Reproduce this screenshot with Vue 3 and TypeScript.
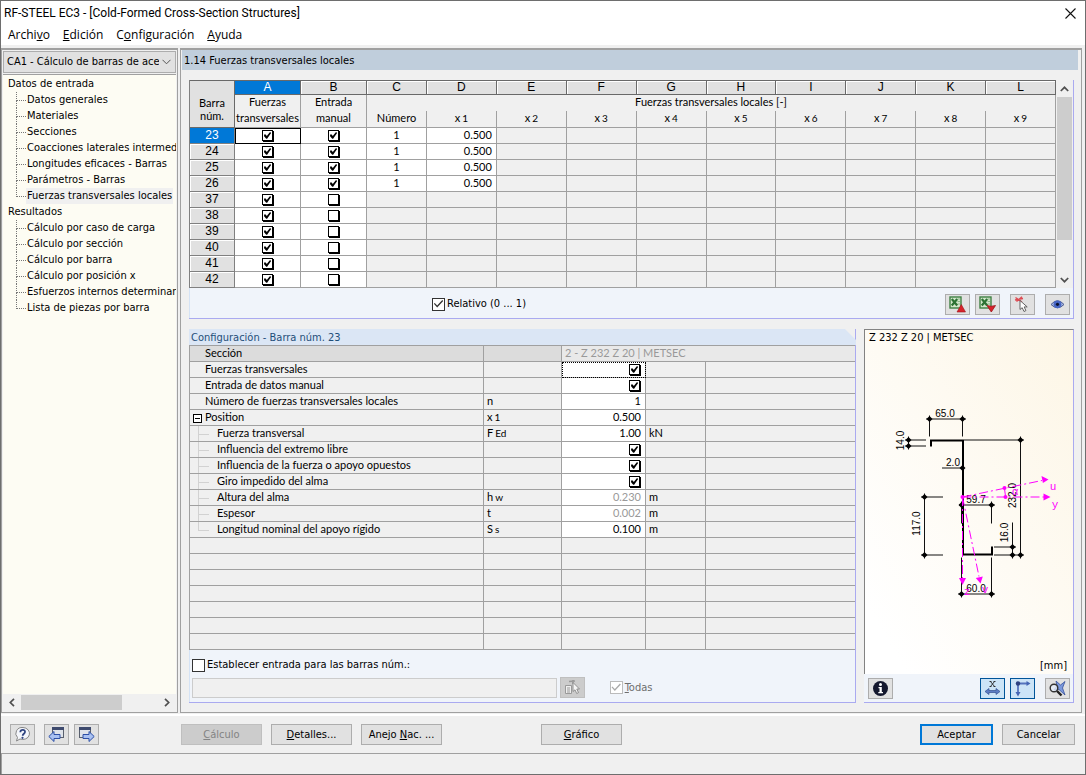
<script setup lang="ts">
import { reactive, ref } from 'vue'

type Mnemonic = [string, string, string]

interface GridRow {
  id: number
  force: boolean
  manual: boolean
  count: string
  x1: string
}

interface SettingRow {
  label: string
  level: number
  symbol?: string
  sub?: string
  value?: string
  unit?: string
  checked?: boolean
  muted?: boolean
}

const menus: Mnemonic[] = [
  ['Archi', 'v', 'o'],
  ['', 'E', 'dición'],
  ['C', 'o', 'nfiguración'],
  ['', 'A', 'yuda'],
]

const activeItem = ref('Fuerzas transversales locales')
const tree = [
  {
    title: 'Datos de entrada',
    items: [
      'Datos generales',
      'Materiales',
      'Secciones',
      'Coacciones laterales intermedias',
      'Longitudes eficaces - Barras',
      'Parámetros - Barras',
      'Fuerzas transversales locales',
    ],
  },
  {
    title: 'Resultados',
    items: [
      'Cálculo por caso de carga',
      'Cálculo por sección',
      'Cálculo por barra',
      'Cálculo por posición x',
      'Esfuerzos internos determinantes',
      'Lista de piezas por barra',
    ],
  },
]

const letters = ['A', 'B', 'C', 'D', 'E', 'F', 'G', 'H', 'I', 'J', 'K', 'L']

const rows = reactive<GridRow[]>(
  [23, 24, 25, 26, 37, 38, 39, 40, 41, 42].map((id) => {
    const filled = id < 30
    return { id, force: true, manual: filled, count: filled ? '1' : '', x1: filled ? '0.500' : '' }
  }),
)

const settings = reactive<SettingRow[]>([
  { label: 'Fuerzas transversales', level: 0, checked: true },
  { label: 'Entrada de datos manual', level: 0, checked: true },
  { label: 'Número de fuerzas transversales locales', level: 0, symbol: 'n', value: '1' },
  { label: 'Position', level: 1, symbol: 'x', sub: '1', value: '0.500' },
  { label: 'Fuerza transversal', level: 2, symbol: 'F', sub: 'Ed', value: '1.00', unit: 'kN' },
  { label: 'Influencia del extremo libre', level: 2, checked: true },
  { label: 'Influencia de la fuerza o apoyo opuestos', level: 2, checked: true },
  { label: 'Giro impedido del alma', level: 2, checked: true },
  { label: 'Altura del alma', level: 2, symbol: 'h', sub: 'w', value: '0.230', unit: 'm', muted: true },
  { label: 'Espesor', level: 2, symbol: 't', value: '0.002', unit: 'm', muted: true },
  { label: 'Longitud nominal del apoyo rígido', level: 2, symbol: 'S', sub: 's', value: '0.100', unit: 'm' },
])

const relative = ref(true)
const applyTo = ref(false)
const all = ref(true)
const members = ref('')
const loadCase = ref('CA1')

const dots: [number, number][] = [
  [929.5, 418.5], [962.5, 418.5], [908.5, 439.5], [908.5, 445.5],
  [1020.5, 439.5], [1020.5, 554.5], [962.5, 467.5], [924.5, 496.5],
  [924.5, 554.5], [961.5, 504.5], [991.5, 504.5], [1012.5, 546.5],
  [1012.5, 554.5], [961.5, 593.5], [991.5, 593.5],
]
</script>

<template>
  <div class="window">
    <header class="titlebar">
      <h1>RF-STEEL EC3 - [Cold-Formed Cross-Section Structures]</h1>
      <button class="close" type="button" aria-label="Cerrar">
        <svg width="11" height="11" viewBox="0 0 11 11"><path d="M.5.5l10 10M10.5.5l-10 10" stroke="#111" stroke-width="1.1" /></svg>
      </button>
    </header>
    <nav class="menubar">
      <button v-for="m in menus" :key="m.join('')" type="button">{{ m[0] }}<u>{{ m[1] }}</u>{{ m[2] }}</button>
    </nav>

    <div class="body">
      <aside class="side">
        <div class="combo">
          <select v-model="loadCase" aria-label="Caso">
            <option value="CA1">CA1 - Cálculo de barras de acero</option>
          </select>
          <svg width="9" height="6" viewBox="0 0 9 6"><path d="M.5.8l4 4 4-4" fill="none" stroke="#555" /></svg>
        </div>
        <div class="tree">
          <section v-for="g in tree" :key="g.title">
            <h2>{{ g.title }}</h2>
            <ul>
              <li v-for="item in g.items" :key="item">
                <a href="#" :class="{ active: item === activeItem }" @click.prevent="activeItem = item">{{ item }}</a>
              </li>
            </ul>
          </section>
        </div>
        <div class="hscroll">
          <svg width="6" height="9" viewBox="0 0 6 9"><path d="M5 .8L1.300 4.500 5 8.200" fill="none" stroke="#505050" stroke-width="1.700" /></svg>
          <div class="track"><div class="thumb"></div></div>
          <svg width="6" height="9" viewBox="0 0 6 9"><path d="M1 .8l3.700 3.700L1 8.200" fill="none" stroke="#505050" stroke-width="1.700" /></svg>
        </div>
      </aside>

      <main class="main">
        <h2 class="heading">1.14 Fuerzas transversales locales</h2>

        <section class="grid-panel">
          <div class="grid-wrap">
            <table class="grid">
              <colgroup>
                <col class="c-id" /><col class="c-check" /><col class="c-check" /><col class="c-num" />
                <col v-for="n in 9" :key="n" />
              </colgroup>
              <thead>
                <tr class="letters">
                  <th rowspan="3" class="corner">Barra<br />núm.</th>
                  <th v-for="l in letters" :key="l" :class="{ on: l === 'A' }">{{ l }}</th>
                </tr>
                <tr class="names">
                  <th class="sep">Fuerzas</th>
                  <th class="sep">Entrada</th>
                  <th colspan="10">Fuerzas transversales locales [-]</th>
                </tr>
                <tr class="names last">
                  <th class="sep">transversales</th>
                  <th class="sep">manual</th>
                  <th class="sep">Número</th>
                  <th v-for="n in 9" :key="n" class="sep">x<small>{{ n }}</small></th>
                </tr>
              </thead>
              <tbody>
                <tr v-for="(r, i) in rows" :key="r.id">
                  <th :class="{ on: i === 0 }">{{ r.id }}</th>
                  <td class="white" :class="{ focus: i === 0 }">
                    <input v-model="r.force" class="tick" type="checkbox" :aria-label="`Fuerzas transversales ${r.id}`" />
                  </td>
                  <td class="white">
                    <input v-model="r.manual" class="tick" type="checkbox" :aria-label="`Entrada manual ${r.id}`" />
                  </td>
                  <td :class="{ white: r.manual }">{{ r.count }}</td>
                  <td class="num" :class="{ white: r.manual }">{{ r.x1 }}</td>
                  <td v-for="n in 8" :key="n"></td>
                </tr>
              </tbody>
            </table>
            <div class="vscroll">
              <svg width="9" height="6" viewBox="0 0 9 6"><path d="M.8 5l3.700-3.700L8.200 5" fill="none" stroke="#505050" stroke-width="1.700" /></svg>
              <div class="vtrack"><div class="vthumb"></div></div>
              <svg width="9" height="6" viewBox="0 0 9 6"><path d="M.8 1l3.700 3.700L8.200 1" fill="none" stroke="#505050" stroke-width="1.700" /></svg>
            </div>
          </div>
          <div class="grid-tools">
            <label class="check"><input v-model="relative" type="checkbox" />Relativo (0 ... 1)</label>
            <div class="tools">
              <button class="icon" type="button" aria-label="Exportar a Excel">
                <svg width="17" height="17" viewBox="0 0 17 17">
                  <rect x="1" y="1" width="11" height="11" fill="#d3e8cc" stroke="#3f8043" stroke-width="1.400" />
                  <path d="M8.500 3h2.500M8.500 5.500h2.500M8.500 8h2.500" stroke="#8fb98a" />
                  <path d="M2.800 3l5.400 6.500M8.200 3L2.800 9.500" stroke="#2c7233" stroke-width="2.200" />
                  <path d="M12.300 8.500l4.200 7.500H8z" fill="#d8232b" stroke="#9c151c" stroke-width=".6" />
                </svg>
              </button>
              <button class="icon" type="button" aria-label="Importar de Excel">
                <svg width="17" height="17" viewBox="0 0 17 17">
                  <rect x="1" y="1" width="11" height="11" fill="#d3e8cc" stroke="#3f8043" stroke-width="1.400" />
                  <path d="M8.500 3h2.500M8.500 5.500h2.500M8.500 8h2.500" stroke="#8fb98a" />
                  <path d="M2.800 3l5.400 6.500M8.200 3L2.800 9.500" stroke="#2c7233" stroke-width="2.200" />
                  <path d="M8 9.500q4.300 1.500 8.500 0L12.300 16z" fill="#d8232b" stroke="#9c151c" stroke-width=".8" />
                </svg>
              </button>
              <button class="icon gap" type="button" aria-label="Seleccionar">
                <svg width="17" height="17" viewBox="0 0 17 17">
                  <path d="M1.500 1.500l6.500 4.500M8 .8L2.500 5.500M1 4l8-1.500" stroke="#dd4a52" stroke-width="1.400" />
                  <path d="M6 4.500v9l2.200-1.800 1.800 3.800 1.900-.9-1.700-3.700h3z" fill="#fff" stroke="#555" stroke-width=".9" />
                </svg>
              </button>
              <button class="icon gap" type="button" aria-label="Vista">
                <svg width="17" height="17" viewBox="0 0 17 17">
                  <path d="M2 8.500Q8.500 1 15 8.500 8.500 15 2 8.500z" fill="#aebde6" stroke="#4a5a90" />
                  <circle cx="8.500" cy="8.300" r="3.900" fill="#4766c4" />
                  <circle cx="8.500" cy="8.300" r="1.600" fill="#0d1430" />
                </svg>
              </button>
            </div>
          </div>
        </section>

        <div class="lower">
          <section class="settings">
            <h3>Configuración - Barra núm. 23</h3>
            <table class="props">
              <colgroup><col /><col class="p-sym" /><col class="p-val" /><col class="p-unit" /><col class="p-rest" /></colgroup>
              <tbody>
                <tr class="section-row">
                  <th scope="row"><span class="lbl">Sección</span></th>
                  <td></td>
                  <td class="section" colspan="3">2 - Z 232 Z 20 | METSEC</td>
                </tr>
                <tr v-for="(s, i) in settings" :key="s.label">
                  <th scope="row" :class="{ child: s.level === 2, end: i === settings.length - 1 }">
                    <button v-if="s.level === 1" class="fold" type="button" aria-label="Contraer"></button>
                    <span class="lbl">{{ s.label }}</span>
                  </th>
                  <td>{{ s.symbol }}<small v-if="s.sub">{{ s.sub }}</small></td>
                  <td class="val" :class="{ muted: s.muted, dotted: i === 0 }">
                    <input v-if="s.checked !== undefined" v-model="s.checked" class="tick" type="checkbox" :aria-label="s.label" />
                    <template v-else>{{ s.value }}</template>
                  </td>
                  <td>{{ s.unit }}</td>
                  <td></td>
                </tr>
                <tr v-for="n in 7" :key="n"><th></th><td></td><td></td><td></td><td></td></tr>
              </tbody>
            </table>
            <div class="apply">
              <label class="check"><input v-model="applyTo" type="checkbox" />Establecer entrada para las barras núm.:</label>
              <div class="apply-row">
                <input v-model="members" class="members" type="text" disabled aria-label="Barras núm." />
                <button class="icon off" type="button" disabled aria-label="Elegir barras">
                  <svg width="17" height="17" viewBox="0 0 17 17">
                    <path d="M1.500 6.500h6v8h-6z" fill="#eee" stroke="#999" />
                    <path d="M3 9h3M3 11h3M3 13h3" stroke="#999" />
                    <path d="M5 2.500l6-.5M9 1v4" stroke="#999" stroke-width="1.500" />
                    <path d="M9 3.500v9l2-1.700 1.700 3.700 1.800-.9-1.700-3.600h2.700z" fill="#f5f5f5" stroke="#888" stroke-width=".9" />
                  </svg>
                </button>
                <label class="check disabled"><input v-model="all" type="checkbox" disabled /><span><u>T</u>odas</span></label>
              </div>
            </div>
          </section>

          <section class="preview">
            <div class="canvas">
              <p>Z 232 Z 20 | METSEC</p>
              <svg class="drawing" viewBox="865 347 208 309">
                <g fill="none" stroke="#111">
                  <path d="M926 418.500H966M929.500 415V436M962.500 415V436" />
                  <path d="M908.500 436V449M905 439.500H926M905 445.500H926" />
                  <path d="M964 439.500H1024M1020.500 436V558M994 554.500H1024" />
                  <path d="M942 467.500H963M924.500 493V558M921 496.500H943M921 554.500H943" />
                  <path d="M959 504.500H995M961.500 501V523M991.500 501V523" />
                  <path d="M1012.500 522V558M994 546.500H1016" />
                  <path d="M958 593.500H995M961.500 557V597M991.500 557V597" />
                </g>
                <path d="M931 446V440H963V554H992V546" fill="none" stroke="#000" stroke-width="2" />
                <path v-for="d in dots" :key="d.join()" :d="`M${d[0] - 3} ${d[1]}l3-3 3 3-3 3z`" fill="#000" />
                <g class="dims" text-anchor="middle">
                  <text x="945" y="416">65.0</text>
                  <text x="953" y="465">2.0</text>
                  <text x="976" y="502">59.7</text>
                  <text x="976" y="591">60.0</text>
                  <text transform="translate(904 440) rotate(-90)">14.0</text>
                  <text transform="translate(920 523) rotate(-90)">117.0</text>
                  <text transform="translate(1016 495) rotate(-90)">232.0</text>
                  <text transform="translate(1008 532) rotate(-90)">16.0</text>
                </g>
                <g stroke="#f0f" fill="none">
                  <path d="M962.500 496.500L1042 480M962.500 496.500H1044M962.500 496.500V578M962.500 496.500L979 576" stroke-dasharray="9 3 2 3" />
                  <path d="M1004.500 488l1 8" />
                </g>
                <g fill="#f0f">
                  <path d="M1048.500 479l-7-3.500 1.400 7z" />
                  <path d="M1050.500 496.500l-7-3.500v7z" />
                  <path d="M962.500 584.500l-3.500-7h7z" />
                  <path d="M980.500 583l-4.700-5.500 7-1.500z" />
                  <circle cx="962.500" cy="496.500" r="2" />
                  <circle cx="1004.500" cy="487.500" r="2" />
                  <circle cx="1005.500" cy="496.500" r="2" />
                </g>
                <g class="axes" text-anchor="middle">
                  <text x="1053" y="489">u</text>
                  <text x="1055" y="507">y</text>
                  <text x="985" y="592">v</text>
                  <text x="967" y="594">z</text>
                  <text x="1015" y="494">α</text>
                </g>
              </svg>
              <p class="unit">[mm]</p>
            </div>
            <div class="preview-tools">
              <button class="icon" type="button" aria-label="Información">
                <svg width="17" height="17" viewBox="0 0 17 17">
                  <circle cx="8.500" cy="8.500" r="7.500" fill="#14182e" />
                  <circle cx="8.500" cy="4.600" r="1.500" fill="#fff" />
                  <path d="M6.500 7h3.300v5h1.200v1.300H6.300V12h1.200V8.300h-1z" fill="#fff" />
                </svg>
              </button>
              <span class="grow"></span>
              <button class="icon lit" type="button" aria-label="Cotas">
                <svg width="17" height="17" viewBox="0 0 17 17">
                  <path d="M6.500 1.500l4 5M10.500 1.500l-4 5M5.500 1.500h2M9.500 1.500h2M5.500 6.500h2M9.500 6.500h2" stroke="#222" stroke-width=".9" />
                  <path d="M1 11.500l4-3v2h7v-2l4 3-4 3v-2H5v2z" fill="#5c7cc4" stroke="#34508f" stroke-width=".7" />
                </svg>
              </button>
              <button class="icon lit" type="button" aria-label="Ejes">
                <svg width="17" height="17" viewBox="0 0 17 17">
                  <path d="M4 14V3.500H14" fill="none" stroke="#5573bd" stroke-width="1.800" />
                  <circle cx="4" cy="3.500" r="2.200" fill="#2b4080" />
                  <path d="M16.500 3.500l-4-2.500v5zM4 16.500L1.500 12h5z" fill="#4465b4" />
                </svg>
              </button>
              <button class="icon gap" type="button" aria-label="Ver todo">
                <svg width="17" height="17" viewBox="0 0 17 17">
                  <path d="M16 1.500L11.500 5 7 1l1 5-3 4 5-.5 6 5.500-2.500-7z" fill="#7b98dc" stroke="#35509b" stroke-width=".8" />
                  <circle cx="5" cy="8" r="3.800" fill="#e6edf9" fill-opacity=".8" stroke="#333" stroke-width="1.400" />
                  <path d="M8 11l4.500 4.500" stroke="#222" stroke-width="2.400" />
                </svg>
              </button>
            </div>
          </section>
        </div>
      </main>
    </div>

    <footer class="footer">
      <button class="icon" type="button" aria-label="Ayuda">
        <svg width="17" height="17" viewBox="0 0 17 17">
          <path d="M9 1.500a6.800 6 0 1 1-3 11.500l-3.500 2 1-3.500A6.500 6 0 0 1 9 1.500z" fill="#f4f6fb" stroke="#888" />
          <path d="M6.300 6.200C6.500 3.200 11.300 3.200 11 6c-.2 1.700-2.300 1.900-2.300 3.700" fill="none" stroke="#2f4480" stroke-width="1.800" />
          <circle cx="8.500" cy="11.800" r="1.100" fill="#2f4480" />
        </svg>
      </button>
      <button class="icon back" type="button" aria-label="Anterior">
        <svg width="17" height="17" viewBox="0 0 17 17">
          <rect x="4.500" y="1.500" width="11" height="10" fill="#dfe3ea" stroke="#59606e" />
          <path d="M4 1h12v3H4z" fill="#3e4a6e" />
          <path d="M.8 10.500l5.200-5v3h6v4H6v3z" fill="#a9c1f2" stroke="#2d4fa6" />
        </svg>
      </button>
      <button class="icon next" type="button" aria-label="Siguiente">
        <svg width="17" height="17" viewBox="0 0 17 17">
          <rect x="1.500" y="1.500" width="11" height="10" fill="#dfe3ea" stroke="#59606e" />
          <path d="M1 1h12v3H1z" fill="#3e4a6e" />
          <path d="M16.200 10.500l-5.200-5v3H5v4h6v3z" fill="#a9c1f2" stroke="#2d4fa6" />
        </svg>
      </button>
      <div class="actions">
        <button class="btn" type="button" disabled><u>C</u>álculo</button>
        <button class="btn" type="button"><u>D</u>etalles...</button>
        <button class="btn" type="button">Anejo <u>N</u>ac. ...</button>
      </div>
      <button class="btn graph" type="button"><u>G</u>ráfico</button>
      <span class="grow"></span>
      <button class="btn ok" type="button">Aceptar</button>
      <button class="btn cancel" type="button">Cancelar</button>
    </footer>
    <div class="status"></div>
  </div>
</template>

<style>
html,
body {
  margin: 0;
  background: #f0f0f0;
}
</style>

<style scoped>
* {
  box-sizing: border-box;
}
.window {
  min-height: 100vh;
  display: flex;
  flex-direction: column;
  background: #f0f0f0;
  border: 1px solid #6e6e6e;
  color: #000;
  font: 11px/16px 'DejaVu Sans Condensed', 'DejaVu Sans', sans-serif;
}
h1, h2, h3, p, ul {
  margin: 0;
  padding: 0;
  font-weight: normal;
  font-size: inherit;
}
button, input, select {
  font: inherit;
  color: inherit;
  margin: 0;
}
svg {
  display: block;
  flex: none;
}
.grow {
  flex: 1;
}

/* title and menu */
.titlebar {
  display: flex;
  align-items: center;
  justify-content: space-between;
  height: 24px;
  padding: 0 9px 0 3px;
  background: #fff;
  font: 12px/24px Roboto, 'Noto Sans', sans-serif;
}
.close {
  border: 0;
  padding: 0;
  background: none;
}
.menubar {
  display: flex;
  gap: 13px;
  height: 20px;
  padding-left: 7px;
  background: #fff;
  font: 12px/20px 'Open Sans', 'Noto Sans', sans-serif;
}
.menubar button {
  border: 0;
  padding: 0 0 1px;
  background: none;
}

.body {
  flex: 1;
  display: flex;
  gap: 2px;
  padding: 3px 3px 1px 0;
  border-bottom: 2px solid #fff;
}

/* navigation */
.side {
  width: 177px;
  flex: none;
  display: flex;
  flex-direction: column;
  padding: 1px;
  border: 1px solid #a0a0a0;
  border-top-width: 2px;
}
.combo {
  display: flex;
  align-items: center;
  height: 22px;
  padding-right: 4px;
  background: #e1e1e1;
  border: 1px solid #adadad;
}
.combo select {
  flex: 1;
  min-width: 0;
  height: 20px;
  margin-right: 3px;
  padding: 0 0 0 3px;
  border: 0;
  background: none;
  appearance: none;
}
.tree {
  flex: 1;
  margin-top: 1px;
  padding: 1px 0 0 5px;
  border-top: 1px solid #a0a0a0;
  background: #fdfcf3;
  overflow: hidden;
  white-space: nowrap;
}
.tree ul {
  list-style: none;
  padding-left: 8px;
}
.tree li {
  position: relative;
  height: 16px;
  padding-left: 10px;
}
.tree li::before {
  content: '';
  position: absolute;
  left: 0;
  top: 0;
  width: 9px;
  height: 8px;
  border-left: 1px dotted #777;
  border-bottom: 1px dotted #777;
}
.tree li:not(:last-child)::after {
  content: '';
  position: absolute;
  left: 0;
  top: 8px;
  height: 8px;
  border-left: 1px dotted #777;
}
.tree a {
  display: inline-block;
  padding: 0 1px;
  color: inherit;
  text-decoration: none;
}
.tree a.active {
  background: #f0f0f0;
}
.hscroll {
  display: flex;
  align-items: center;
  justify-content: space-between;
  gap: 6px;
  height: 17px;
  padding: 0 6px;
}
.track {
  flex: 1;
}
.thumb {
  width: 74%;
  height: 15px;
  background: #cdcdcd;
}

/* main area */
.main {
  flex: 1;
  min-width: 0;
  display: flex;
  flex-direction: column;
  border: 1px solid #a0a0a0;
  border-top-width: 2px;
  padding: 0 7px 9px 8px;
}
.heading {
  height: 20px;
  margin: 0 -4px 10px -7px;
  padding-left: 2px;
  background: #c0cedc;
  line-height: 22px;
}
.grid-panel {
  border-right: 1px solid #aaaaf0;
  border-bottom: 1px solid #aaaaf0;
}
.grid-wrap {
  display: flex;
}
table {
  border-collapse: separate;
  border-spacing: 0;
  table-layout: fixed;
  font: 11px/13px Lato, 'Liberation Sans', sans-serif;
}
th, td {
  height: 16px;
  padding: 0;
  font-weight: normal;
  border-right: 1px solid #a0a0a0;
  border-bottom: 1px solid #a0a0a0;
  white-space: nowrap;
  overflow: hidden;
  vertical-align: top;
}
small {
  margin-left: 2px;
  font-size: 10px;
  line-height: 1;
}
.grid {
  flex: 1;
  width: 100%;
  min-width: 0;
  border-left: 1px solid #808080;
  text-align: center;
}
.c-id { width: 45px; }
.c-check { width: 66px; }
.c-num { width: 60px; }
.letters th {
  height: 15px;
  font: 12px/13px 'Liberation Sans', sans-serif;
  background: #e1e1e1;
  border-top: 1px solid #696969;
  border-right-color: #696969;
  border-bottom-color: #696969;
  box-shadow: inset 1px 1px #fff;
}
.letters th.corner {
  font: 11px/13px Lato, 'Liberation Sans', sans-serif;
  padding-top: 15px;
  box-shadow: none;
}
.letters th.on {
  background: #0078d7;
  color: #fff;
  box-shadow: none;
}
.names th {
  border: 0;
}
.names th.sep {
  border-right: 1px solid #a0a0a0;
}
.names th:last-child {
  border-right: 1px solid #a0a0a0;
}
.names.last th {
  height: 17px;
  border-bottom: 1px solid #a0a0a0;
}
.grid tbody th {
  background: #e1e1e1;
  font: 12px/14px 'Liberation Sans', sans-serif;
  border-color: #808080;
  box-shadow: inset 1px 1px #fff;
}
.grid tbody th.on {
  background: #0078d7;
  color: #fff;
  box-shadow: none;
}
.white {
  background: #fff;
}
.grid td.focus {
  outline: 1px solid #000;
  outline-offset: -1px;
}
.grid td.num {
  padding-right: 4px;
  text-align: right;
}
.tick {
  appearance: none;
  display: block;
  width: 11px;
  height: 11px;
  margin: 2px auto 0;
  border: 1px solid #000;
  background: #fff;
  box-shadow: 1px 1px #000;
}
.tick:checked::before {
  content: '';
  display: block;
  width: 9px;
  height: 9px;
  background: #000;
  clip-path: polygon(12% 40%, 30% 40%, 42% 56%, 78% 12%, 90% 22%, 46% 86%, 36% 86%, 12% 58%);
}
.vscroll {
  width: 17px;
  flex: none;
  display: flex;
  flex-direction: column;
  align-items: center;
  padding: 6px 0 5px;
}
.vtrack {
  flex: 1;
  align-self: stretch;
  padding: 5px 1px 6px;
}
.vthumb {
  height: 82%;
  background: #cdcdcd;
}
.grid-tools {
  display: flex;
  align-items: center;
  height: 30px;
  padding: 2px 3px 0 242px;
  border-left: 1px solid #d5e3f5;
  background: #f0f4fa;
}
.tools {
  margin-left: auto;
  display: flex;
  gap: 5px;
}
.check {
  display: flex;
  align-items: center;
  gap: 2px;
}
.check input {
  appearance: none;
  width: 13px;
  height: 13px;
  border: 1px solid #333;
  background: #fff;
}
.check input:checked::before {
  content: '';
  display: block;
  width: 11px;
  height: 11px;
  background: #333;
  clip-path: polygon(8% 48%, 16% 40%, 38% 64%, 84% 14%, 93% 22%, 38% 82%);
}
.check.disabled {
  margin-left: 25px;
  color: #6d6d6d;
}
.check.disabled input {
  border-color: #bbb;
}
.check.disabled input:checked::before {
  background: #aaa;
}
.icon {
  display: grid;
  place-items: center;
  flex: none;
  width: 25px;
  height: 21px;
  padding: 0;
  border: 1px solid #adadad;
  background: #e1e1e1;
}
.icon.gap {
  margin-left: 5px;
}
.icon.lit {
  background: #cce4f7;
  border-color: #005499;
}
.icon.off {
  background: #ccc;
  border-color: #bfbfbf;
}

/* member settings */
.lower {
  flex: 1;
  display: flex;
  gap: 8px;
  margin-top: 10px;
}
.settings {
  flex: 1;
  min-width: 0;
  display: flex;
  flex-direction: column;
  border-right: 1px solid #aaaaf0;
  border-bottom: 1px solid #aaaaf0;
}
.settings h3 {
  height: 16px;
  margin-right: -1px;
  padding-left: 2px;
  background: #dbe6f5;
  clip-path: polygon(0 0, calc(100% - 11px) 0, 100% 11px, 100% 100%, 0 100%);
  color: #1f4e79;
  line-height: 18px;
}
.props {
  width: 100%;
  border-top: 1px solid #a0a0a0;
  border-left: 1px solid #a0a0a0;
}
.p-sym { width: 78px; }
.p-val { width: 84px; }
.p-unit { width: 60px; }
.p-rest { width: 149px; }
.props th, .props td {
  text-align: left;
}
.props td {
  padding-left: 3px;
}
.props tr > :last-child {
  border-right: 0;
}
.props th {
  padding-left: 15px;
}
.props th:has(.fold) {
  padding-left: 3px;
}
.fold {
  display: inline-block;
  width: 9px;
  height: 9px;
  margin-right: 3px;
  padding: 0;
  border: 1px solid #000;
  background: linear-gradient(#000, #000) center / 5px 1px no-repeat #fff;
  vertical-align: -1px;
}
.props th.child {
  padding-left: 27px;
  background:
    linear-gradient(#d2d2d2, #d2d2d2) 8px 0 / 1px 100% no-repeat,
    linear-gradient(#d2d2d2, #d2d2d2) 8px 8px / 11px 1px no-repeat;
}
.props th.child.end {
  background:
    linear-gradient(#d2d2d2, #d2d2d2) 8px 0 / 1px 8px no-repeat,
    linear-gradient(#d2d2d2, #d2d2d2) 8px 8px / 11px 1px no-repeat;
}
.section-row th, .section-row td {
  background: #dcdcdc;
}
.props .section {
  background: #e9e9e9;
  color: #999;
}
.props .val {
  padding-right: 4px;
  background: #fff;
  text-align: right;
}
.props .tick {
  margin: 2px 1px 0 auto;
}
.props .dotted {
  outline: 1px dotted #000;
  outline-offset: -1px;
}
.props .muted {
  color: #999;
}
.apply {
  flex: 1;
  padding: 7px 0 0 2px;
  border-left: 1px solid #d5e3f5;
  background: #f0f4fa;
}
.apply-row {
  display: flex;
  align-items: center;
  margin-top: 4px;
}
.members {
  width: 55%;
  height: 20px;
  margin-right: 3px;
  border: 1px solid #ccc;
  background: #f0f0f0;
}

/* cross-section preview */
.preview {
  width: 210px;
  flex: none;
  display: flex;
  flex-direction: column;
}
.canvas {
  flex: 1;
  display: flex;
  flex-direction: column;
  border-left: 1px solid #828282;
  border-top: 1px solid #828282;
  border-right: 1px solid #aaaaf0;
  background: linear-gradient(to top right, #fff 10%, #fdf6e6);
}
.canvas p {
  padding-left: 4px;
}
.canvas .unit {
  padding-right: 6px;
  text-align: right;
}
.drawing {
  flex: 1;
  width: 100%;
}
.dims {
  font: 10px 'Liberation Sans', sans-serif;
}
.axes {
  font: 11px 'Liberation Mono', monospace;
  fill: #f0f;
}
.preview-tools {
  display: flex;
  align-items: center;
  gap: 5px;
  height: 29px;
  padding: 0 3px 0 4px;
  border: solid #aaaaf0;
  border-width: 0 1px 1px 0;
  background: #f0f4fa;
}

/* dialog buttons */
.footer {
  display: flex;
  align-items: center;
  height: 37px;
  padding: 0 10px 0 9px;
}
.btn {
  width: 81px;
  height: 21px;
  padding: 0;
  border: 1px solid #adadad;
  background: #e1e1e1;
}
.btn:disabled {
  background: #ccc;
  border-color: #bfbfbf;
  color: #838383;
}
.back {
  margin-left: 9px;
}
.next {
  margin-left: 5px;
}
.actions {
  display: flex;
  gap: 9px;
  margin-left: 82px;
}
.graph {
  margin-left: 99px;
}
.ok {
  width: 73px;
  border: 2px solid #0078d7;
}
.cancel {
  width: 73px;
  margin-left: 9px;
}
.status {
  height: 21px;
  border: solid #a0a0a0;
  border-width: 1px 0 0 1px;
}
</style>
